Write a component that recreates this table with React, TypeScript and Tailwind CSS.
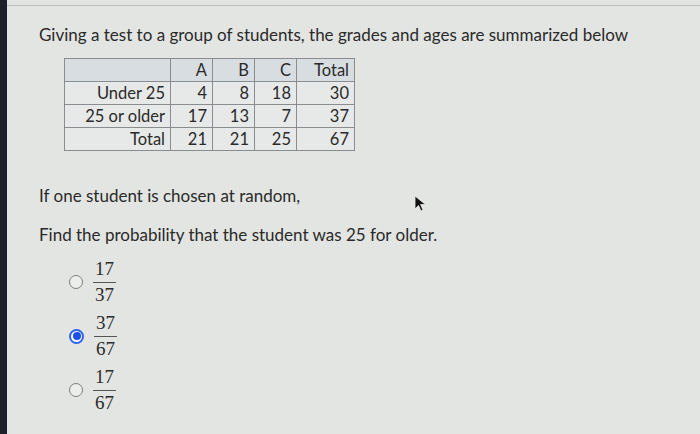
import React from "react";

const rows = [
  ["Under 25", "4", "8", "18", "30"],
  ["25 or older", "17", "13", "7", "37"],
  ["Total", "21", "21", "25", "67"],
];

const options = [
  { num: "17", den: "37", checked: false },
  { num: "37", den: "67", checked: true },
  { num: "17", den: "67", checked: false },
];

function Fraction({ num, den }: { num: string; den: string }) {
  return (
    <span className="inline-flex flex-col items-center font-['Liberation_Serif',serif] text-[19px] leading-[26px] text-[#2b2b2b]">
      <span>{num}</span>
      <span className="w-[23px] border-t border-[#555]" />
      <span className="-mt-[1px]">{den}</span>
    </span>
  );
}

function Radio({ checked }: { checked: boolean }) {
  if (checked) {
    return (
      <span className="flex h-[15px] w-[15px] items-center justify-center rounded-full border-[2px] border-[#2f62f0] bg-white">
        <span className="h-[8px] w-[8px] rounded-full bg-[#1c4fe6]" />
      </span>
    );
  }
  return <span className="h-[14px] w-[14px] rounded-full border border-[#7c7f7c] bg-[#eceeec]" />;
}

export default function App() {
  return (
    <div className="flex h-[434px] w-[700px] overflow-hidden bg-[#1c212b]">
      <div className="relative ml-[7px] flex-1 bg-[#e3e5e2] font-['Lato','Open_Sans',sans-serif] text-[#2a2a2a]">
        {/* faint top edge */}
        <div className="mt-[5px] h-px bg-[#b9bcbb]" />

        <p className="ml-[32px] mt-[17px] text-[17px] leading-[24px]">
          Giving a test to a group of students, the grades and ages are summarized below
        </p>

        <table className="ml-[57px] mt-[11px] border-collapse border border-[#8a8d8f] text-[16.5px] leading-[22px]">
          <thead>
            <tr className="bg-[#d7dde1]">
              <th className="w-[106px] border border-[#8a8d8f]" />
              {["A", "B", "C"].map((h) => (
                <th key={h} className="w-[42px] border border-[#8a8d8f] px-[5px] text-right font-normal">
                  {h}
                </th>
              ))}
              <th className="w-[58px] border border-[#8a8d8f] px-[5px] text-right font-normal">Total</th>
            </tr>
          </thead>
          <tbody>
            {rows.map((r) => (
              <tr key={r[0]} className="bg-[#e6e9e8]">
                {r.map((c, i) => (
                  <td key={i} className="border border-[#8a8d8f] px-[5px] text-right">
                    {c}
                  </td>
                ))}
              </tr>
            ))}
          </tbody>
        </table>

        <p className="ml-[32px] mt-[34px] text-[17px] leading-[22px]">If one student is chosen at random,</p>
        <p className="ml-[32px] mt-[17px] text-[17px] leading-[22px]">
          Find the probability that the student was 25 for older.
        </p>

        <div className="ml-[62px] mt-[10px] flex flex-col gap-[2px]">
          {options.map((o, i) => (
            <label key={i} className="flex items-center gap-[10px]">
              <Radio checked={o.checked} />
              <Fraction num={o.num} den={o.den} />
            </label>
          ))}
        </div>

        {/* mouse cursor in the photo */}
        <svg className="absolute left-[407px] top-[195px]" width="14" height="18" viewBox="0 0 14 18">
          <path d="M1 1 L1 14 L4.5 10.5 L7 16 L9 15 L6.6 9.6 L11.5 9.6 Z" fill="#111" stroke="#eee" strokeWidth="0.8" />
        </svg>
      </div>
    </div>
  );
}
